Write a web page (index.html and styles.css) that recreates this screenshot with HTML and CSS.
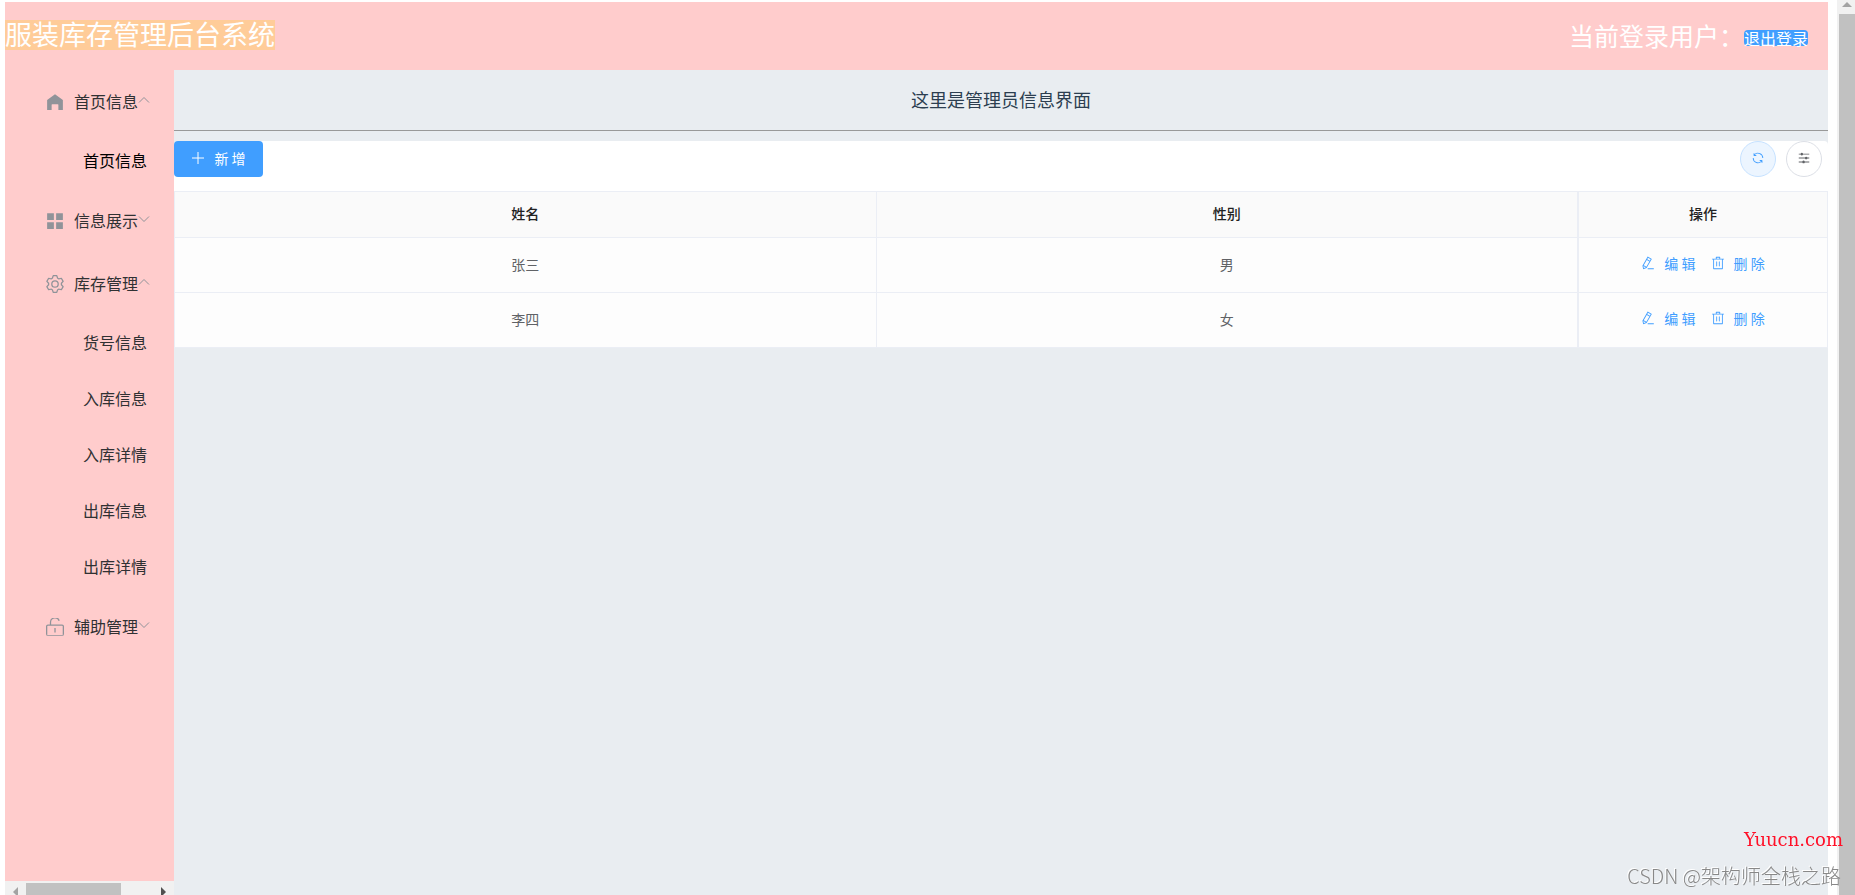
FILE: index.html
```
<!DOCTYPE html>
<html lang="zh-CN">
  <head>
    <meta charset="UTF-8" />
    <meta name="viewport" content="width=device-width, initial-scale=1.0" />
    <title>服装库存管理后台系统</title>
    <link rel="stylesheet" href="styles.css">
  </head>
  <body>
    <svg class="sprite">
      <symbol id="icon-arrow" viewBox="0 0 12 12">
        <path d="M1 3.5 6 8.5 11 3.5" fill="none" stroke="currentColor" />
      </symbol>
      <symbol id="icon-edit" viewBox="0 0 1024 1024">
        <path d="m199.04 672.64 193.984 112 224-387.968-193.92-112-224 388.032zm-23.872 60.16 32.896 148.288 144.896-45.696L175.168 732.8zM455.04 229.248l193.92 112 56.704-98.112-193.984-112-56.64 98.112zM104.32 708.8l384-665.024 304.768 175.936L409.152 884.8h.064l-248.448 78.336L104.32 708.8zm384 254.272v-64h448v64h-448z" />
      </symbol>
      <symbol id="icon-delete" viewBox="0 0 1024 1024">
        <path d="M160 256H96a32 32 0 0 1 0-64h256V95.936a32 32 0 0 1 32-32h256a32 32 0 0 1 32 32V192h256a32 32 0 1 1 0 64h-64v672a32 32 0 0 1-32 32H192a32 32 0 0 1-32-32V256zm448-64v-64H416v64h192zM224 896h576V256H224v640zm192-128a32 32 0 0 1-32-32V416a32 32 0 0 1 64 0v320a32 32 0 0 1-32 32zm192 0a32 32 0 0 1-32-32V416a32 32 0 0 1 64 0v320a32 32 0 0 1-32 32z" />
      </symbol>
    </svg>

    <div class="page">
      <div class="container">
        <header class="header">
          <h1><span>服装库存管理后台系统</span></h1>
          <div class="user">
            <span>当前登录用户：</span>
            <button class="logout" type="button">退出登录</button>
          </div>
        </header>

        <div class="body">
          <aside class="aside">
            <nav class="menu">
              <button class="menu-title" type="button">
                <svg class="menu-icon" viewBox="0 0 1024 1024"><path d="M512 64 64 400v560h256V672a32 32 0 0 1 32-32h320a32 32 0 0 1 32 32v288h256V400z" /></svg>
                首页信息
                <svg class="arrow open"><use href="#icon-arrow" /></svg>
              </button>
              <a class="menu-item active" href="#">首页信息</a>
              <button class="menu-title" type="button">
                <svg class="menu-icon" viewBox="0 0 1024 1024"><path d="M64 64h384v384H64zM576 64h384v384H576zM64 576h384v384H64zM576 576h384v384H576z" /></svg>
                信息展示
                <svg class="arrow"><use href="#icon-arrow" /></svg>
              </button>
              <button class="menu-title" type="button">
                <svg class="menu-icon" viewBox="64 64 896 896"><path d="M600.704 64a32 32 0 0 1 30.464 22.208l35.2 109.376c14.784 7.232 28.928 15.36 42.432 24.512l112.384-24.192a32 32 0 0 1 34.432 15.36L944.32 364.8a32 32 0 0 1-4.032 37.504l-77.12 85.12a357.12 357.12 0 0 1 0 49.024l77.12 85.248a32 32 0 0 1 4.032 37.504l-88.704 153.6a32 32 0 0 1-34.432 15.296L708.8 803.904c-13.44 9.088-27.648 17.28-42.368 24.512l-35.264 109.376A32 32 0 0 1 600.704 960H423.296a32 32 0 0 1-30.464-22.208L357.696 828.48a351.616 351.616 0 0 1-42.56-24.64l-112.32 24.256a32 32 0 0 1-34.432-15.36L79.68 659.2a32 32 0 0 1 4.032-37.504l77.12-85.248a357.12 357.12 0 0 1 0-48.896l-77.12-85.248A32 32 0 0 1 79.68 364.8l88.704-153.6a32 32 0 0 1 34.432-15.296l112.32 24.256c13.568-9.152 27.776-17.408 42.56-24.64l35.2-109.312A32 32 0 0 1 423.232 64H600.64zm-23.424 64H446.72l-36.352 113.088-24.512 11.968a294.113 294.113 0 0 0-34.816 20.096l-22.656 15.36-116.224-25.088-65.28 113.152 79.68 88.192-1.92 27.136a293.12 293.12 0 0 0 0 40.192l1.92 27.136-79.808 88.192 65.344 113.152 116.224-25.024 22.656 15.296a294.113 294.113 0 0 0 34.816 20.096l24.512 11.968L446.72 896h130.688l36.48-113.152 24.448-11.904a288.282 288.282 0 0 0 34.752-20.096l22.592-15.296 116.288 25.024 65.28-113.152-79.744-88.192 1.92-27.136a293.12 293.12 0 0 0 0-40.256l-1.92-27.136 79.808-88.128-65.344-113.152-116.288 24.96-22.592-15.232a287.616 287.616 0 0 0-34.752-20.096l-24.448-11.904L577.344 128zM512 320a192 192 0 1 1 0 384 192 192 0 0 1 0-384zm0 64a128 128 0 1 0 0 256 128 128 0 0 0 0-256z" /></svg>
                库存管理
                <svg class="arrow open"><use href="#icon-arrow" /></svg>
              </button>
              <a class="menu-item" href="#">货号信息</a>
              <a class="menu-item" href="#">入库信息</a>
              <a class="menu-item" href="#">入库详情</a>
              <a class="menu-item" href="#">出库信息</a>
              <a class="menu-item" href="#">出库详情</a>
              <button class="menu-title" type="button">
                <svg class="menu-icon" viewBox="64 64 896 896"><path d="M160 448a32 32 0 0 0-32 32v416a32 32 0 0 0 32 32h704a32 32 0 0 0 32-32V480a32 32 0 0 0-32-32H160zm0-64h704a96 96 0 0 1 96 96v384a96 96 0 0 1-96 96H160a96 96 0 0 1-96-96V480a96 96 0 0 1 96-96z" /><path d="M480 560h64v224h-64zM690 209A192 192 0 0 0 320 280v130h-64V280A256 256 0 0 1 750 185z" /></svg>
                辅助管理
                <svg class="arrow"><use href="#icon-arrow" /></svg>
              </button>
            </nav>
            <div class="hbar">
              <i class="tri left"></i>
              <div class="hbar-track"><div class="hbar-thumb"></div></div>
              <i class="tri right"></i>
            </div>
          </aside>

          <main class="main">
            <h2>这里是管理员信息界面</h2>
            <div class="toolbar">
              <button class="add" type="button">
                <svg viewBox="0 0 14 14"><path d="M7 1v12M1 7h12" fill="none" stroke="currentColor" /></svg>
                新 增
              </button>
              <div class="tools">
                <button class="circle refresh" type="button" aria-label="刷新">
                  <svg viewBox="0 0 1024 1024"><path d="M771.776 794.88A384 384 0 0 1 128 512h64a320 320 0 0 0 555.712 216.448H654.72a32 32 0 1 1 0-64h149.056a32 32 0 0 1 32 32v148.928a32 32 0 1 1-64 0v-50.56zM276.288 295.616h92.992a32 32 0 0 1 0 64H220.16a32 32 0 0 1-32-32V178.56a32 32 0 0 1 64 0v50.56A384 384 0 0 1 896.128 512h-64a320 320 0 0 0-555.776-216.384z" /></svg>
                </button>
                <button class="circle" type="button" aria-label="列设置">
                  <svg viewBox="0 0 1024 1024"><path d="M389.44 768a96.064 96.064 0 0 1 181.12 0H896v64H570.56a96.064 96.064 0 0 1-181.12 0H128v-64h261.44zm192-288a96.064 96.064 0 0 1 181.12 0H896v64H762.56a96.064 96.064 0 0 1-181.12 0H128v-64h453.44zm-320-288a96.064 96.064 0 0 1 181.12 0H896v64H442.56a96.064 96.064 0 0 1-181.12 0H128v-64h133.44z" /></svg>
                </button>
              </div>
            </div>

            <table class="table">
              <thead>
                <tr>
                  <th>姓名</th>
                  <th>性别</th>
                  <th class="ops">操作</th>
                </tr>
              </thead>
              <tbody>
                <tr>
                  <td>张三</td>
                  <td>男</td>
                  <td class="ops">
                    <button class="link" type="button"><svg><use href="#icon-edit" /></svg>编 辑</button>
                    <button class="link" type="button"><svg><use href="#icon-delete" /></svg>删 除</button>
                  </td>
                </tr>
                <tr>
                  <td>李四</td>
                  <td>女</td>
                  <td class="ops">
                    <button class="link" type="button"><svg><use href="#icon-edit" /></svg>编 辑</button>
                    <button class="link" type="button"><svg><use href="#icon-delete" /></svg>删 除</button>
                  </td>
                </tr>
              </tbody>
            </table>
          </main>
        </div>
      </div>

      <div class="vbar">
        <i class="tri up"></i>
        <div class="vbar-thumb"></div>
      </div>
    </div>

    <div class="marks">
      <span class="mark-site">Yuucn.com</span>
      <span class="mark-author">CSDN @架构师全栈之路</span>
    </div>
  </body>
</html>
```
FILE: styles.css
```
* {
  box-sizing: border-box;
}

body {
  margin: 0;
  font-family: "Noto Sans CJK SC", sans-serif;
  color: #303133;
  background: #fff;
}

button {
  font-family: inherit;
  border: none;
  padding: 0;
  cursor: pointer;
}

svg {
  fill: currentColor;
  flex: none;
}

.sprite {
  display: none;
}

.page {
  display: flex;
  height: 100vh;
  overflow: hidden;
}

.container {
  flex: 1;
  display: flex;
  flex-direction: column;
  margin: 2px 9px 0 5px;
}

/* header */
.header {
  display: flex;
  justify-content: space-between;
  height: 68px;
  padding-right: 20px;
  background: #fcc;
  color: #fff;
}

.header h1 {
  margin: 18px 0 0;
  font-size: 27px;
  font-weight: 400;
  line-height: 28px;
}

.header h1 span {
  display: block;
  padding-bottom: 2px;
  background: #fc9;
}

.user {
  display: flex;
  align-items: center;
  padding-bottom: 2px;
  font-size: 25px;
}

.logout {
  height: 16px;
  margin-top: 6px;
  border-radius: 4px;
  background: #409eff;
  color: #fff;
  font-size: 16px;
  line-height: 16px;
}

/* sidebar */
.body {
  flex: 1;
  display: flex;
  min-height: 0;
}

.aside {
  display: flex;
  flex-direction: column;
  width: 169px;
  background: #fcc;
}

.menu {
  flex: 1;
  display: flex;
  flex-direction: column;
}

.menu-title {
  display: flex;
  align-items: center;
  height: 63px;
  padding: 0 0 2px 40px;
  background: none;
  color: #303133;
  font-size: 16px;
}

.menu-icon {
  width: 18px;
  height: 18px;
  margin: 2px 10px 0 1px;
  color: #909399;
}

.arrow {
  width: 12px;
  height: 12px;
  margin-bottom: 2px;
  color: #909399;
}

.arrow.open {
  transform: rotate(180deg);
}

.menu-item {
  padding: 0 0 2px 78px;
  color: #303133;
  font-size: 16px;
  line-height: 54px;
  text-decoration: none;
}

.menu-item.active {
  color: #000;
}

/* scrollbars */
.tri {
  border: 5px solid transparent;
}

.tri.left {
  border-left-width: 0;
  border-right-color: #a3a3a3;
}

.tri.right {
  border-right-width: 0;
  border-left-color: #505050;
}

.tri.up {
  margin: 2px 0 7px;
  border-top-width: 0;
  border-bottom-color: #a3a3a3;
}

.hbar {
  display: flex;
  align-items: flex-end;
  height: 14px;
  padding: 0 8px;
  overflow: hidden;
  background: #f1f1f1;
}

.hbar .tri {
  margin-bottom: -2px;
}

.hbar-track {
  flex: 1;
  padding: 0 8px;
}

.hbar-thumb {
  width: 75%;
  height: 12px;
  background: #c1c1c1;
}

.vbar {
  display: flex;
  flex-direction: column;
  align-items: center;
  width: 18px;
  padding-left: 2px;
  background: #f1f1f1;
}

.vbar-thumb {
  flex: 1;
  width: 100%;
  background: #c1c1c1;
}

/* content */
.main {
  flex: 1;
  background: #e9edf1;
}

.main h2 {
  margin: 0 0 10px;
  padding-bottom: 2px;
  border-bottom: 1px solid #999;
  color: #2c3e50;
  font-size: 18px;
  font-weight: 400;
  line-height: 58px;
  text-align: center;
}

.toolbar {
  display: flex;
  justify-content: space-between;
  height: 50px;
  padding-right: 6px;
  border-radius: 4px 4px 0 0;
  background: #fff;
}

.add {
  display: flex;
  align-items: center;
  justify-content: center;
  gap: 9px;
  width: 89px;
  height: 36px;
  padding-bottom: 2px;
  border-radius: 4px;
  background: #409eff;
  color: #fff;
  font-size: 14px;
}

.add svg {
  width: 14px;
  height: 14px;
}

.tools {
  display: flex;
  gap: 10px;
}

.circle {
  display: flex;
  align-items: center;
  justify-content: center;
  width: 36px;
  height: 36px;
  padding-bottom: 2px;
  border: 1px solid #dcdfe6;
  border-radius: 50%;
  background: #fff;
  color: #606266;
}

.circle svg {
  width: 14px;
  height: 14px;
}

.circle.refresh {
  border-color: #c6e2ff;
  background: #ecf5ff;
  color: #409eff;
}

.table {
  width: 100%;
  table-layout: fixed;
  border-collapse: separate;
  border-spacing: 0;
  border: 1px solid #ebeef5;
  border-bottom: none;
  background: #fdfdfd;
  color: #606266;
  font-size: 14px;
  text-align: center;
}

.table th,
.table td {
  height: 55px;
  padding: 0 0 3px;
  border-right: 1px solid #ebeef5;
  border-bottom: 1px solid #ebeef5;
}

.table th {
  height: 46px;
  background: #fafafa;
  color: #222;
  font-weight: 500;
}

.table .ops {
  width: 249px;
  border-left: 1px solid #ebeef5;
  border-right: none;
}

.link {
  display: inline-flex;
  align-items: center;
  gap: 9px;
  margin: 0 6px;
  background: none;
  color: #409eff;
  font-size: 14px;
}

.link svg {
  width: 14px;
  height: 14px;
}

/* watermarks */
.marks {
  position: fixed;
  right: 12px;
  bottom: 5px;
  display: flex;
  flex-direction: column;
  align-items: flex-end;
  gap: 10px;
}

.mark-site {
  color: #ff1028;
  font-family: "DejaVu Serif", serif;
  font-size: 18px;
  line-height: 24px;
}

.mark-author {
  margin-right: 2px;
  color: #888;
  font-size: 20px;
  font-weight: 300;
  line-height: 28px;
  text-shadow: -1px -1px 0 #fff;
}
```
